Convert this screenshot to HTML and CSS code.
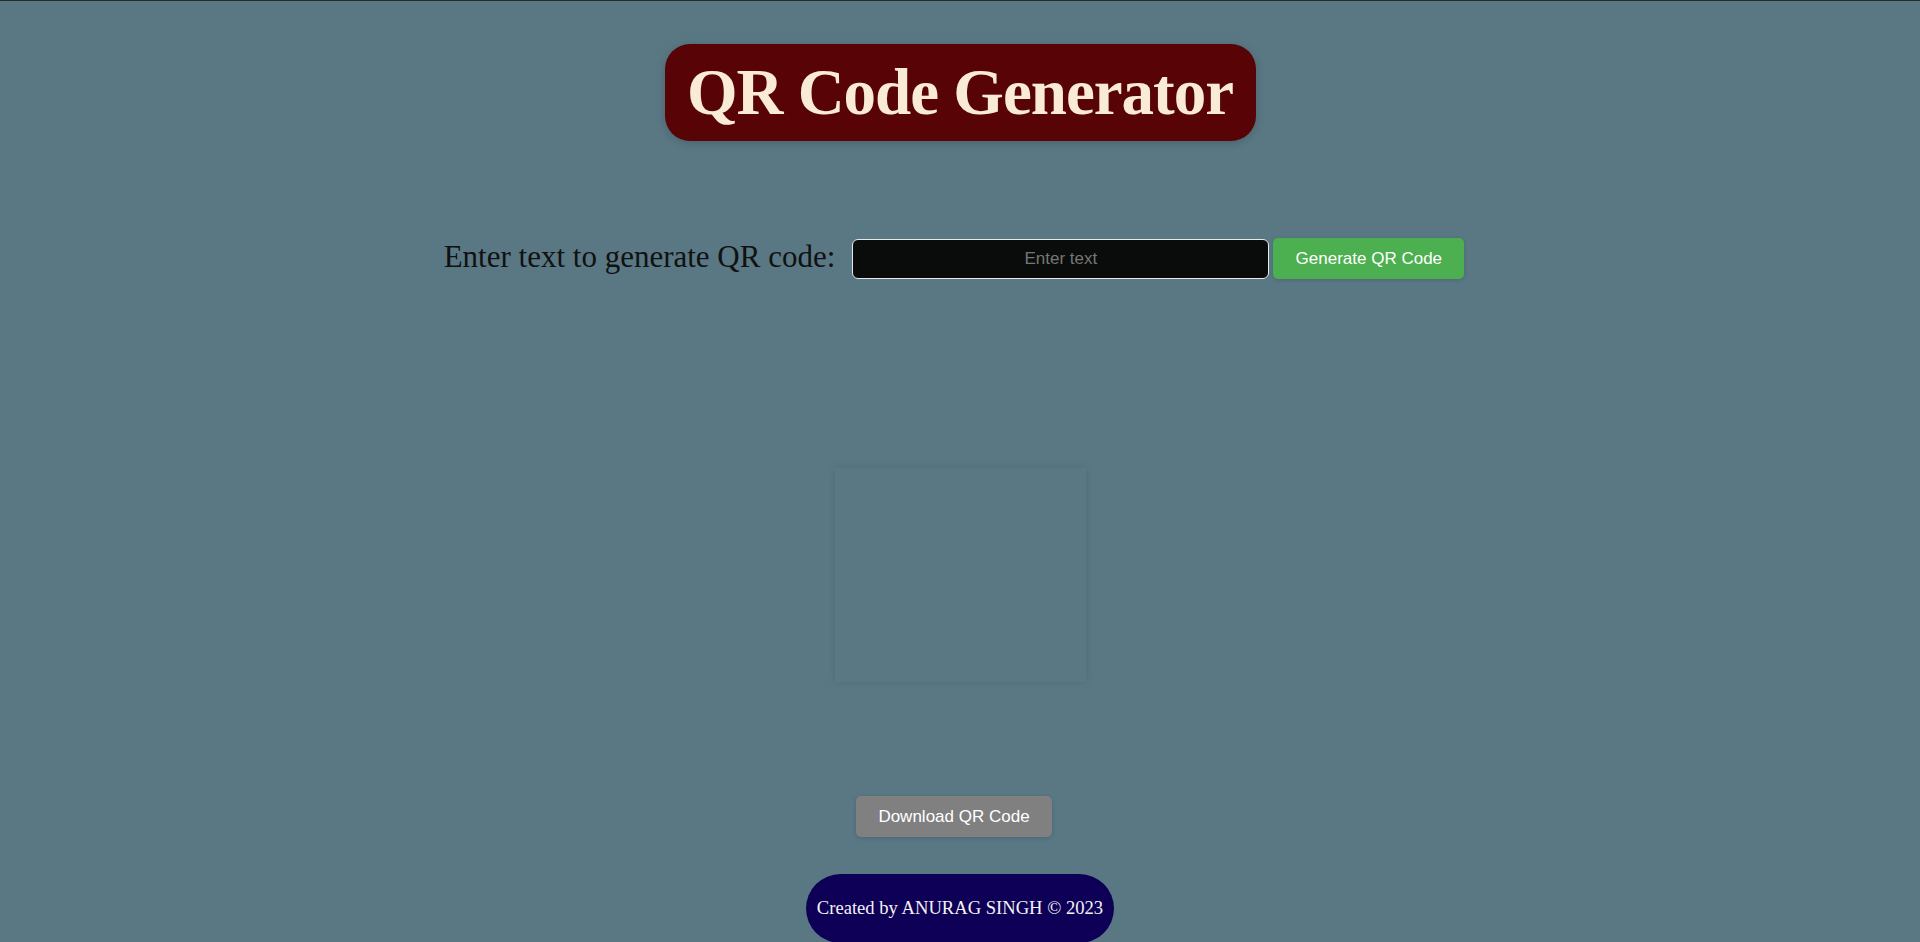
FILE: index.html
```html
<!DOCTYPE html>
<html lang="en">
<head>
<meta charset="UTF-8">
<title>QR Code Generator</title>
<link rel="stylesheet" href="styles.css">
</head>
<body>
  <div class="page">
    <header class="title-wrap">
      <h1 class="title">QR Code Generator</h1>
    </header>
    <div class="form-row">
      <label class="label" for="qrText">Enter text to generate QR code:</label>
      <input class="text-input" id="qrText" type="text" placeholder="Enter text">
      <button class="btn btn-generate" type="button">Generate QR Code</button>
    </div>
    <div class="qr-wrap">
      <div class="qr-box"></div>
    </div>
    <div class="download-wrap">
      <button class="btn btn-download" type="button">Download QR Code</button>
    </div>
    <footer class="footer-wrap">
      <div class="footer">Created by ANURAG SINGH © 2023</div>
    </footer>
  </div>
</body>
</html>
```
FILE: styles.css
```css
html, body {
  margin: 0;
  padding: 0;
}
body {
  background: #597884;
  border-top: 1px solid #2a2a2a;
  font-family: "Liberation Serif", "Times New Roman", serif;
  height: 941px;
  overflow: hidden;
}
.page {
  display: flex;
  flex-direction: column;
  align-items: center;
}
.title-wrap {
  margin-top: 43px;
  display: flex;
  justify-content: center;
}
.title {
  margin: 0;
  box-sizing: border-box;
  width: 591px;
  text-align: center;
  background: #580406;
  color: #faebd7;
  font-family: "Liberation Serif", "Times New Roman", serif;
  font-weight: bold;
  font-size: 65px;
  letter-spacing: -1px;
  line-height: 73px;
  padding: 12px 0;
  border-radius: 25px;
  box-shadow: 0 2px 8px rgba(0, 0, 0, 0.18);
}
.form-row {
  margin-top: 97px;
  display: flex;
  align-items: center;
  margin-right: 12px;
}
.label {
  font-family: "Liberation Serif", "Times New Roman", serif;
  font-size: 31px;
  color: #111;
  margin-right: 17px;
  position: relative;
  top: -2px;
}
.text-input {
  box-sizing: border-box;
  width: 417px;
  height: 40px;
  background: #0a0c0b;
  border: 1px solid #e8e8e8;
  border-radius: 6px;
  color: #eee;
  font-family: "Liberation Sans", Arial, sans-serif;
  font-size: 17px;
  text-align: center;
  outline: none;
  padding: 0 8px;
}
.text-input::placeholder {
  color: #767676;
}
.btn {
  box-sizing: border-box;
  border: none;
  color: #fff;
  font-family: "Liberation Sans", Arial, sans-serif;
  font-size: 17px;
  line-height: 20px;
  padding: 10px 21px;
  border-radius: 5px;
  box-shadow: 0 1px 4px rgba(0, 0, 0, 0.15);
  cursor: pointer;
}
.btn-generate {
  background: #4caf50;
  margin-left: 4px;
  width: 191px;
  height: 41px;
}
.qr-wrap {
  margin-top: 189px;
  display: flex;
  justify-content: center;
}
.qr-box {
  width: 251px;
  height: 214px;
  box-shadow: 0 0 8px rgba(0, 0, 0, 0.1);
}
.download-wrap {
  margin-top: 114px;
  display: flex;
  justify-content: center;
  margin-right: 12px;
}
.btn-download {
  background: #808080;
  width: 196px;
  height: 41px;
}
.footer-wrap {
  margin-top: 37px;
  display: flex;
  justify-content: center;
}
.footer {
  background: #0e0057;
  color: #f3f3f3;
  font-family: "Liberation Serif", "Times New Roman", serif;
  font-size: 18.6px;
  line-height: 22px;
  width: 308px;
  box-sizing: border-box;
  text-align: center;
  padding: 23px 10px 24px;
  border-radius: 35px;
}
```
